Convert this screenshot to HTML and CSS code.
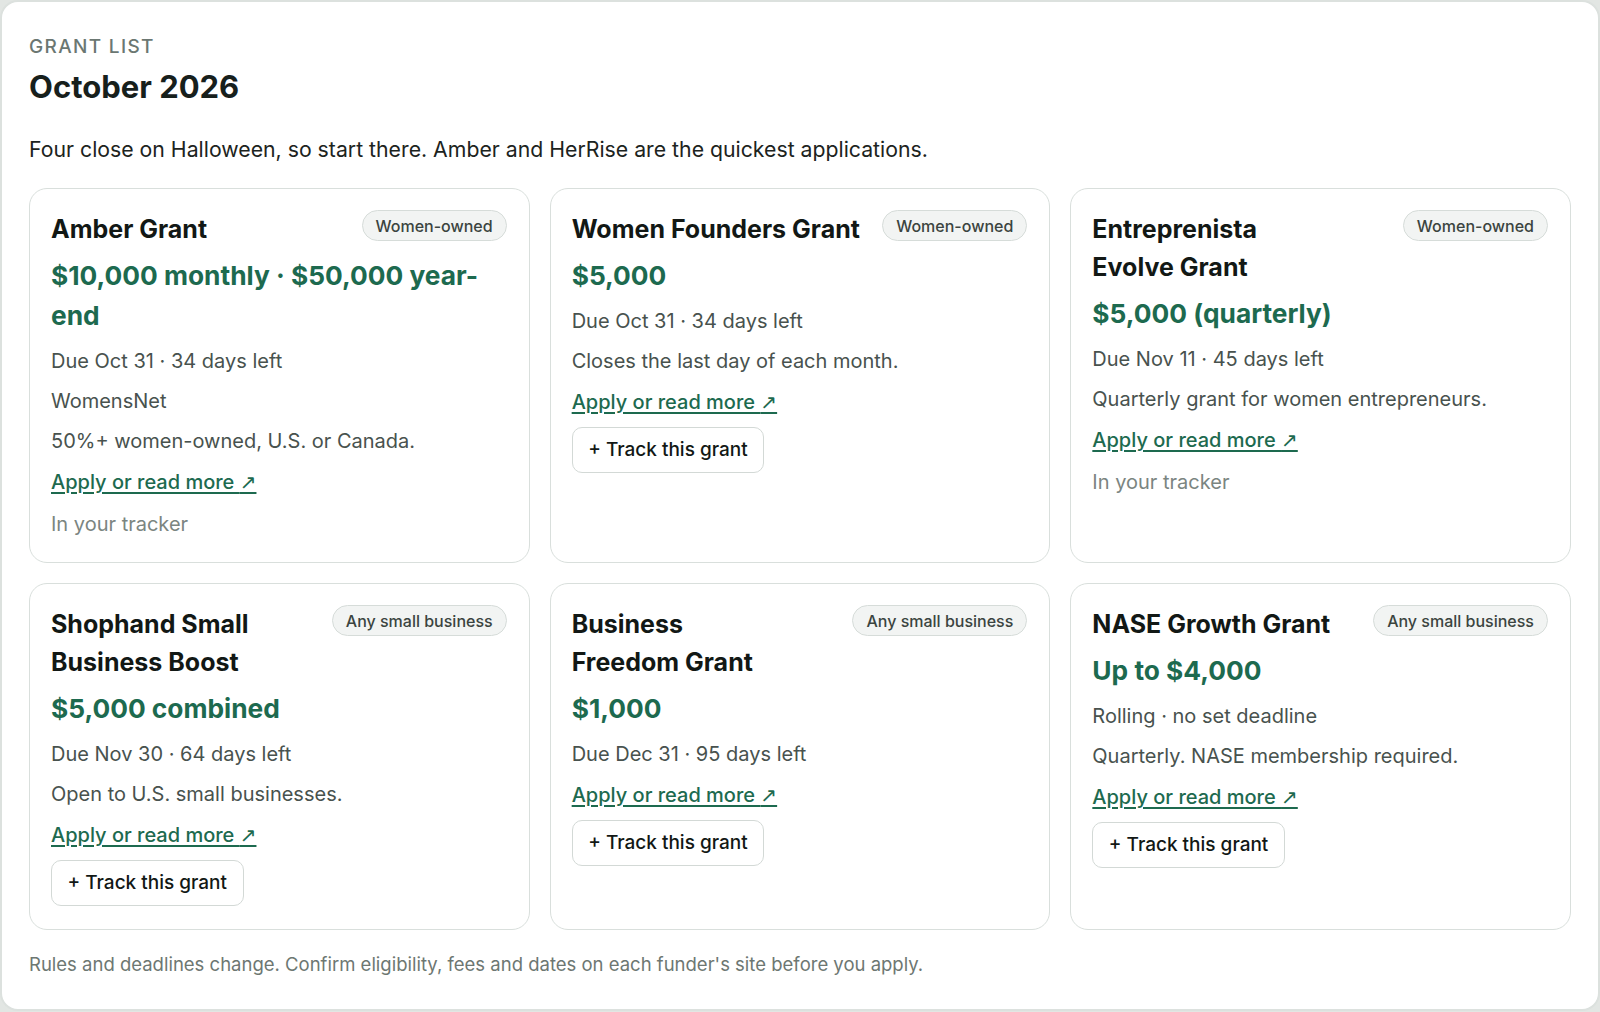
FILE: index.html
```html
<!DOCTYPE html>
<html lang="en">
<head>
<meta charset="utf-8">
<title>Grant list — October 2026</title>
<link rel="stylesheet" href="styles.css">
</head>
<body>
<main class="panel">
  <p class="eyebrow">GRANT LIST</p>
  <h1 class="heading">October 2026</h1>
  <p class="intro">Four close on Halloween, so start there. Amber and HerRise are the quickest applications.</p>

  <section class="grid">
    <article class="card">
      <div class="card-head">
        <h2 class="title">Amber Grant</h2>
        <span class="badge">Women-owned</span>
      </div>
      <p class="amount">$10,000 monthly · $50,000 year-end</p>
      <p class="meta first">Due Oct 31 · 34 days left</p>
      <p class="meta">WomensNet</p>
      <p class="meta">50%+ women-owned, U.S. or Canada.</p>
      <a class="link" href="#">Apply or read more <span class="arrow">↗</span></a>
      <p class="tracked">In your tracker</p>
    </article>

    <article class="card">
      <div class="card-head">
        <h2 class="title">Women Founders Grant</h2>
        <span class="badge">Women-owned</span>
      </div>
      <p class="amount">$5,000</p>
      <p class="meta first">Due Oct 31 · 34 days left</p>
      <p class="meta">Closes the last day of each month.</p>
      <a class="link" href="#">Apply or read more <span class="arrow">↗</span></a>
      <button class="track" type="button">+ Track this grant</button>
    </article>

    <article class="card">
      <div class="card-head">
        <h2 class="title">Entreprenista Evolve Grant</h2>
        <span class="badge">Women-owned</span>
      </div>
      <p class="amount">$5,000 (quarterly)</p>
      <p class="meta first">Due Nov 11 · 45 days left</p>
      <p class="meta">Quarterly grant for women entrepreneurs.</p>
      <a class="link" href="#">Apply or read more <span class="arrow">↗</span></a>
      <p class="tracked">In your tracker</p>
    </article>

    <article class="card">
      <div class="card-head">
        <h2 class="title">Shophand Small Business Boost</h2>
        <span class="badge">Any small business</span>
      </div>
      <p class="amount">$5,000 combined</p>
      <p class="meta first">Due Nov 30 · 64 days left</p>
      <p class="meta">Open to U.S. small businesses.</p>
      <a class="link" href="#">Apply or read more <span class="arrow">↗</span></a>
      <button class="track" type="button">+ Track this grant</button>
    </article>

    <article class="card">
      <div class="card-head">
        <h2 class="title">Business Freedom Grant</h2>
        <span class="badge">Any small business</span>
      </div>
      <p class="amount">$1,000</p>
      <p class="meta first">Due Dec 31 · 95 days left</p>
      <a class="link" href="#">Apply or read more <span class="arrow">↗</span></a>
      <button class="track" type="button">+ Track this grant</button>
    </article>

    <article class="card">
      <div class="card-head">
        <h2 class="title">NASE Growth Grant</h2>
        <span class="badge">Any small business</span>
      </div>
      <p class="amount">Up to $4,000</p>
      <p class="meta first">Rolling · no set deadline</p>
      <p class="meta">Quarterly. NASE membership required.</p>
      <a class="link" href="#">Apply or read more <span class="arrow">↗</span></a>
      <button class="track" type="button">+ Track this grant</button>
    </article>
  </section>

  <p class="footnote">Rules and deadlines change. Confirm eligibility, fees and dates on each funder's site before you apply.</p>
</main>
</body>
</html>
```

FILE: styles.css
```css
* {
  box-sizing: border-box;
}

html {
  background: #e2e6e3;
}

body {
  margin: 0;
  font-family: Inter, "Noto Sans", "Liberation Sans", sans-serif;
  color: #1f2623;
}

.panel {
  display: flex;
  flex-direction: column;
  background: #ffffff;
  border: 2px solid #dce1de;
  border-radius: 18px;
  padding: 31px 27px 31px 27px;
  margin: 0 0 2px 0;
}

.eyebrow {
  margin: 0;
  font-size: 19px;
  line-height: 27px;
  font-weight: 500;
  letter-spacing: 0.07em;
  color: #6b7772;
}

.heading {
  margin: 9px 0 0 0;
  font-size: 31px;
  line-height: 36px;
  font-weight: 700;
  color: #17201c;
}

.intro {
  margin: 29px 0 0 0;
  font-size: 21.25px;
  line-height: 30px;
  color: #1c2320;
}

.grid {
  margin-top: 24px;
  display: grid;
  grid-template-columns: repeat(3, 1fr);
  gap: 20px;
}

.card {
  display: flex;
  flex-direction: column;
  align-items: flex-start;
  border: 1px solid #d9dfdc;
  border-radius: 18px;
  padding: 21px 22px 23px 21px;
  background: #ffffff;
}

.card-head {
  align-self: stretch;
  display: flex;
  justify-content: space-between;
  align-items: flex-start;
  gap: 16px;
}

.title {
  margin: 0;
  font-size: 25px;
  line-height: 38px;
  font-weight: 700;
  color: #121815;
  text-wrap: balance;
}

.badge {
  flex: none;
  white-space: nowrap;
  font-size: 16px;
  line-height: 20px;
  font-weight: 500;
  color: #3b4440;
  background: #f2f4f3;
  border: 1.5px solid #d6dcd9;
  border-radius: 999px;
  padding: 4.5px 13px;
}

.amount {
  margin: 8px 0 0 0;
  font-size: 26.3px;
  line-height: 40px;
  font-weight: 700;
  color: #1d6a4f;
}

.meta {
  margin: 10px 0 0 0;
  font-size: 20px;
  line-height: 30px;
  color: #48524e;
}

.meta.first {
  margin-top: 10px;
}

.link {
  margin-top: 11px;
  font-size: 20px;
  line-height: 30px;
  font-weight: 500;
  color: #1d6a4f;
  text-decoration: underline;
  text-underline-offset: 3px;
  text-decoration-thickness: 1.5px;
}

.arrow {
  font-family: "DejaVu Sans", sans-serif;
  font-size: 20px;
  line-height: 0;
}

.tracked {
  margin: 12px 0 0 0;
  font-size: 20px;
  line-height: 30px;
  color: #7b8581;
}

.track {
  margin-top: 10px;
  font-family: inherit;
  font-size: 19px;
  line-height: 30px;
  font-weight: 550;
  color: #121815;
  background: #ffffff;
  border: 1px solid #d3d9d6;
  border-radius: 10px;
  padding: 7px 15.5px;
  cursor: pointer;
}

.footnote {
  margin: 21px 0 0 0;
  font-size: 18.5px;
  line-height: 27px;
  color: #6d7772;
}
```
